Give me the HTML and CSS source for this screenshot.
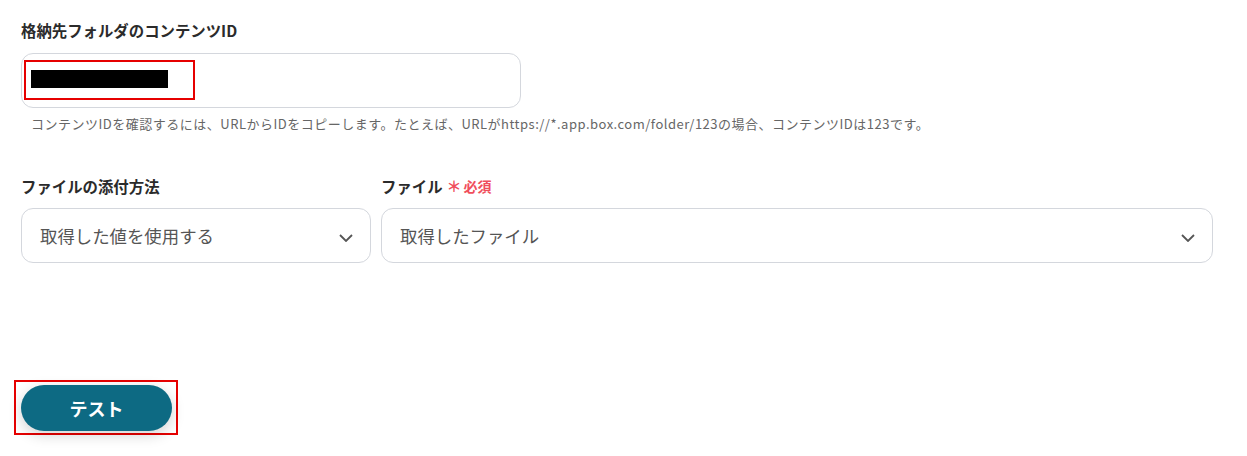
FILE: index.html
```html
<!DOCTYPE html>
<html lang="ja">
<head>
<meta charset="utf-8">
<link rel="stylesheet" href="styles.css">
</head>
<body>
<div class="page">
  <div class="field">
    <div class="label">格納先フォルダのコンテンツID</div>
    <div class="input">
      <div class="mark"><div class="redact"></div></div>
    </div>
    <div class="hint">コンテンツIDを確認するには、URLからIDをコピーします。たとえば、URLがhttps://*.app.box.com/folder/123の場合、コンテンツIDは123です。</div>
  </div>
  <div class="row">
    <div class="col col-a">
      <div class="label">ファイルの添付方法</div>
      <div class="select">
        <span>取得した値を使用する</span>
        <svg class="chev" width="14" height="8" viewBox="0 0 14 8"><path d="M1 1l6 6 6-6" fill="none" stroke="#555" stroke-width="1.8"/></svg>
      </div>
    </div>
    <div class="col col-b">
      <div class="label">ファイル <span class="req">＊</span><span class="req-t">必須</span></div>
      <div class="select">
        <span>取得したファイル</span>
        <svg class="chev" width="14" height="8" viewBox="0 0 14 8"><path d="M1 1l6 6 6-6" fill="none" stroke="#555" stroke-width="1.8"/></svg>
      </div>
    </div>
  </div>
  <div class="btn-mark">
    <button class="btn">テスト</button>
  </div>
</div>
</body>
</html>
```
FILE: styles.css
```css
* { box-sizing: border-box; }
html, body { margin: 0; padding: 0; background: #fff; }
body {
  font-family: "Noto Sans CJK JP", "Noto Sans", sans-serif;
  color: #333;
  width: 1247px;
  height: 456px;
  overflow: hidden;
}
.page { padding: 20px 0 0 21px; }
.label {
  font-size: 15.4px;
  font-weight: 700;
  line-height: 20px;
  color: #2b2b2b;
  display: flex;
  align-items: center;
}
.input {
  margin-top: 13px;
  width: 500px;
  height: 55px;
  border: 1px solid #d4d7dd;
  border-radius: 12px;
  padding: 6px 0 0 2px;
}
.mark {
  width: 171px;
  height: 40px;
  border: 2px solid #e60000;
  padding: 8px 0 0 5px;
}
.redact { width: 137px; height: 18px; background: #000; }
.hint {
  margin: 8px 0 0 10px;
  font-size: 13px;
  line-height: 16px;
  letter-spacing: 0.5px;
  color: #666;
  white-space: nowrap;
}
.row { display: flex; gap: 10px; margin-top: 44px; }
.col-a { width: 350px; }
.col-b { width: 832px; }
.req { color: #f04e5c; font-size: 15px; margin-left: 4px; }
.req-t { color: #f04e5c; font-size: 14px; margin-left: 2px; }
.select {
  margin-top: 12px;
  height: 55px;
  border: 1px solid #d4d7dd;
  border-radius: 12px;
  display: flex;
  align-items: center;
  justify-content: space-between;
  padding: 0 17px 0 18px;
  font-size: 17.4px;
  color: #555;
}
.chev { margin-top: 4px; }
.btn-mark {
  margin: 117px 0 0 -7px;
  width: 164px;
  height: 55px;
  border: 2px solid #e60000;
  padding: 3px 0 0 5px;
}
.btn {
  width: 151px;
  height: 46px;
  border: none;
  border-radius: 23px;
  background: #0d6a83;
  color: #fff;
  font-family: inherit;
  font-size: 18px;
  font-weight: 700;
  box-shadow: 0 4px 14px rgba(0,0,0,0.18);
}
```
